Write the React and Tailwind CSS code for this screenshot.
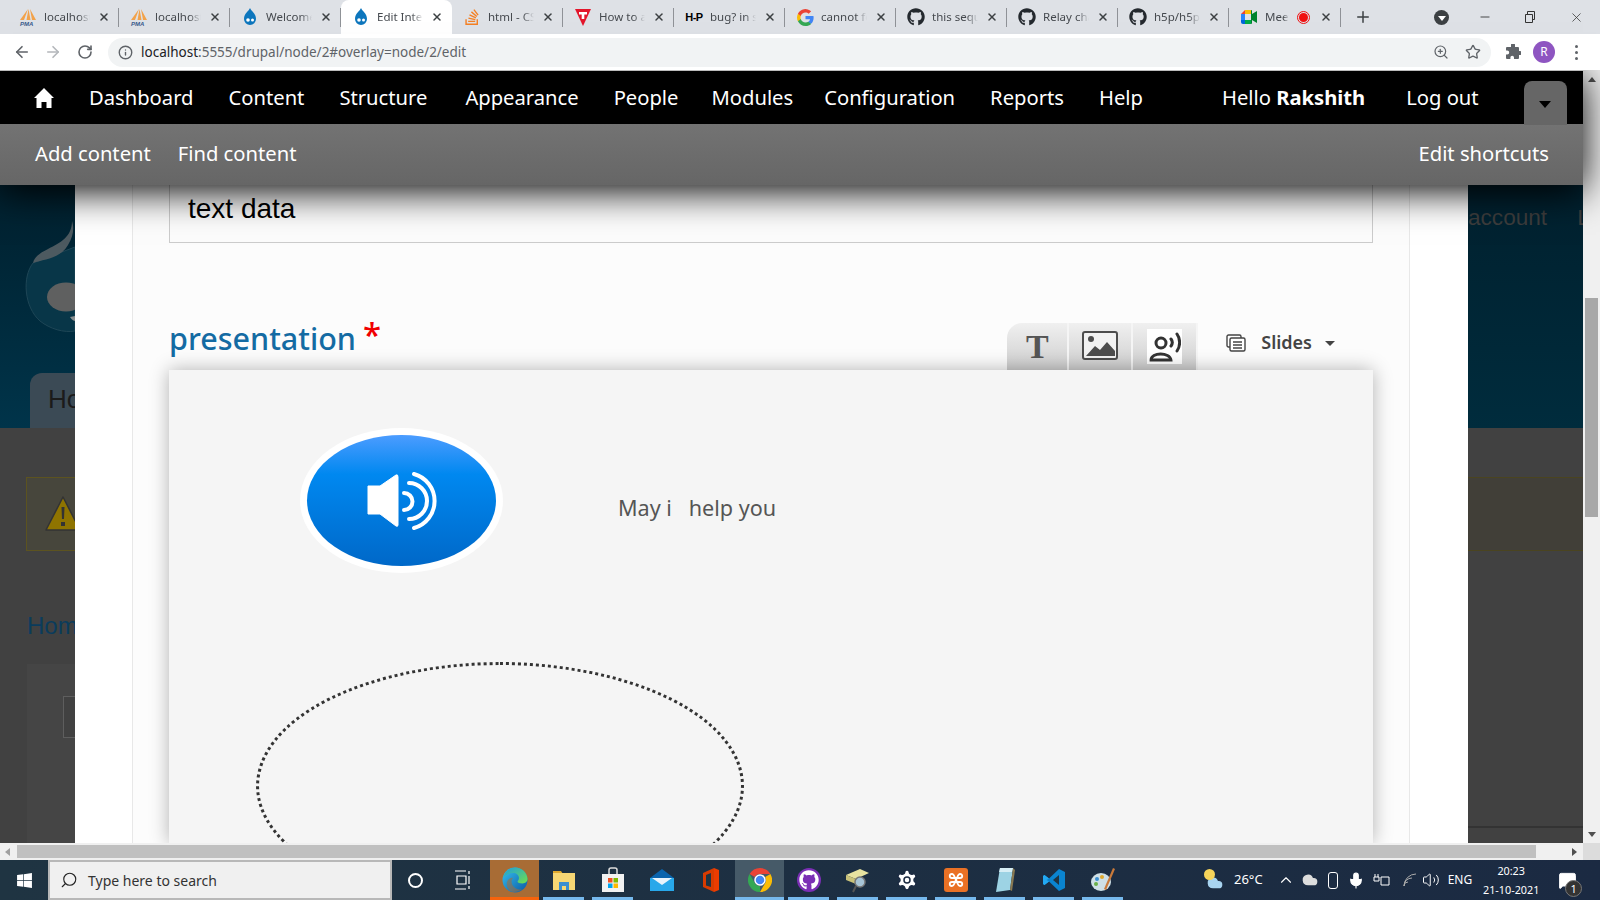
import React from 'react';
import { ArrowLeft, ArrowRight, RotateCw, Info, ZoomIn, Star, X, Plus, Minus, Search, ChevronUp, Mic, Volume2, Cloud, Settings, MessageSquare } from 'lucide-react';
import { FaGithub, FaStackOverflow, FaWindows } from 'react-icons/fa';

const Drop = ({ size = 18 }) => (
  <svg width={size} height={size} viewBox="0 0 18 18">
    <path d="M9 0c1 3 6 5 6 11a6 6 0 0 1-12 0C3 5 8 3 9 0z" fill="#0d76bd" />
    <circle cx="7" cy="12" r="1.8" fill="#fff" />
    <circle cx="11.5" cy="12" r="1.5" fill="#fff" />
  </svg>
);

const Pma = () => (
  <svg width="18" height="18" viewBox="0 0 18 18">
    <path d="M9 1L5 12H1zM9.500 1l2 11H7.500zM11 1l6 11h-4z" fill="#f2a24a" />
    <text x="1" y="17.500" fontSize="6" fontWeight="700" fontStyle="italic" fill="#3a5a8c" fontFamily="Liberation Sans">PMA</text>
  </svg>
);

const Vivaldi = () => (
  <svg width="18" height="18" viewBox="0 0 18 18">
    <path d="M1 1h16L9 18z" fill="#e3162b" />
    <path d="M5 4h8v2.500h-2.700V11H7.700V6.500H5z" fill="#fff" />
  </svg>
);

const GoogleG = () => (
  <svg width="17" height="17" viewBox="0 0 18 18">
    <path d="M17.600 9.200c0-.6-.1-1.200-.2-1.800H9v3.400h4.800a4.100 4.100 0 0 1-1.800 2.700v2.200h2.900c1.700-1.600 2.700-3.800 2.700-6.500z" fill="#4285f4" />
    <path d="M9 18c2.400 0 4.500-.8 5.900-2.200L12 13.500c-.8.500-1.800.9-3 .9-2.300 0-4.300-1.600-5-3.700H1v2.300A9 9 0 0 0 9 18z" fill="#34a853" />
    <path d="M4 10.700a5.400 5.400 0 0 1 0-3.400V5H1a9 9 0 0 0 0 8z" fill="#fbbc05" />
    <path d="M9 3.600c1.300 0 2.500.5 3.400 1.300L15 2.400A9 9 0 0 0 1 5l3 2.300c.7-2.100 2.700-3.700 5-3.700z" fill="#ea4335" />
  </svg>
);

const Meet = () => (
  <svg width="18" height="18" viewBox="0 0 18 18">
    <path d="M1 6l4-4v4z" fill="#ea4335" />
    <path d="M5 2h6v4H5z" fill="#fbbc05" />
    <path d="M1 6h4v6H1z" fill="#2684fc" />
    <path d="M1 12h4v4H3a2 2 0 0 1-2-2z" fill="#0066da" />
    <path d="M5 12h6v4H5z" fill="#00ac47" />
    <path d="M11 2v14a1 1 0 0 0 1-1v-3l5 3V3l-5 3V3a1 1 0 0 0-1-1z" fill="#00832d" />
  </svg>
);

const tabs = [
  { icon: <Pma />, title: 'localhost' },
  { icon: <Pma />, title: 'localhost' },
  { icon: <Drop />, title: 'Welcome' },
  { icon: <Drop />, title: 'Edit Inter', active: true },
  { icon: <FaStackOverflow className="text-[18px] text-[#f48024]" />, title: 'html - CS' },
  { icon: <Vivaldi />, title: 'How to a' },
  { icon: <span className="text-[11px] font-black tracking-tighter text-black [font-family:'Liberation_Sans',sans-serif]">H-P</span>, title: 'bug? in s' },
  { icon: <GoogleG />, title: 'cannot fo' },
  { icon: <FaGithub className="text-[18px] text-[#24292e]" />, title: 'this sequ' },
  { icon: <FaGithub className="text-[18px] text-[#24292e]" />, title: 'Relay cha' },
  { icon: <FaGithub className="text-[18px] text-[#24292e]" />, title: 'h5p/h5p-' },
  { icon: <Meet />, title: 'Meet', rec: true },
];

function Tab({ tab, last }) {
  return (
    <div className={`relative flex h-[34px] w-[111px] shrink-0 items-center pl-[11px] ${tab.active ? 'rounded-t-lg bg-white' : ''}`}>
      <span className="flex w-[18px] justify-center">{tab.icon}</span>
      <span className={`ml-[7px] overflow-hidden whitespace-nowrap text-[11.500px] text-[#45494e] [mask-image:linear-gradient(90deg,#000_75%,transparent)] ${tab.rec ? 'w-[24px]' : 'w-[46px]'}`}>
        {tab.title}
      </span>
      {tab.rec && (
        <span className="ml-[8px] flex h-[13px] w-[13px] items-center justify-center rounded-full border border-[#f01010]">
          <span className="h-[9px] w-[9px] rounded-full bg-[#f01010]" />
        </span>
      )}
      <X className={`${tab.rec ? 'ml-[10px]' : 'ml-[8px]'} h-[12px] w-[12px] text-[#3c4043]`} strokeWidth={3} />
      {!last && !tab.active && <span className="absolute right-0 top-[8px] h-[19px] w-px bg-[#8f9297]" />}
    </div>
  );
}

function TabStrip() {
  return (
    <div className="flex h-[34px] items-center bg-[#dee1e6] pl-[8px] text-[#45494e]">
      {tabs.map((t, i) => <Tab key={i} tab={t} last={i === tabs.length - 1} />)}
      <span className="h-[19px] w-px bg-[#8f9297]" />
      <Plus className="ml-[13px] h-[18px] w-[18px] text-[#3c4043]" strokeWidth={2} />
      <span className="ml-[62px] flex h-[15px] w-[15px] items-center justify-center rounded-full bg-[#3c4043]">
        <span className="mt-[2px] h-0 w-0 border-x-[4px] border-t-[5px] border-x-transparent border-t-white" />
      </span>
      <Minus className="ml-[29px] h-[14px] w-[14px] text-[#333]" strokeWidth={1.5} />
      <svg className="ml-[32px]" width="12" height="12" viewBox="0 0 12 12" fill="none" stroke="#333"><path d="M1.500 3.500h7v8h-7zM3.500 3.500V.5h7v8h-2" /></svg>
      <X className="ml-[33px] h-[15px] w-[15px] text-[#333]" strokeWidth={1.2} />
    </div>
  );
}

function AddressBar() {
  return (
    <div className="relative z-20 flex h-[36px] items-center bg-white">
      <ArrowLeft className="ml-[13px] h-[18px] w-[18px] text-[#5f6368]" strokeWidth={2.2} />
      <ArrowRight className="ml-[13px] h-[18px] w-[18px] text-[#b4b7bb]" strokeWidth={2.2} />
      <RotateCw className="ml-[15px] h-[16px] w-[16px] text-[#5f6368]" strokeWidth={2.4} />
      <div className="ml-[15px] flex h-[29px] w-[1383px] items-center rounded-full bg-[#f1f3f4] pl-[10px]">
        <Info className="h-[15px] w-[15px] text-[#5f6368]" strokeWidth={2.2} />
        <span className="ml-[8px] text-[13.500px] text-[#5f6368]"><span className="text-[#202124]">localhost</span>:5555/drupal/node/2#overlay=node/2/edit</span>
        <ZoomIn className="ml-auto h-[16px] w-[16px] text-[#5f6368]" strokeWidth={1.8} />
        <Star className="ml-[16px] mr-[10px] h-[16px] w-[16px] text-[#5f6368]" strokeWidth={2} />
      </div>
      <svg className="ml-[14px]" width="16" height="16" viewBox="0 0 16 16" fill="#5f6368"><path d="M6 1a2 2 0 0 1 4 0v2h3a1 1 0 0 1 1 1v3h1a2 2 0 0 1 0 4h-1v3a1 1 0 0 1-1 1H9v-1.500a1.800 1.800 0 0 0-3.600 0V15H2a1 1 0 0 1-1-1v-3.500h1.200a2 2 0 0 0 0-4H1V4a1 1 0 0 1 1-1h4z" /></svg>
      <span className="ml-[12px] flex h-[22px] w-[22px] items-center justify-center rounded-full bg-[#8e55c1] text-[12px] text-white">R</span>
      <span className="ml-[20px] flex flex-col gap-[3px]">
        <span className="h-[3px] w-[3px] rounded-full bg-[#5f6368]" />
        <span className="h-[3px] w-[3px] rounded-full bg-[#5f6368]" />
        <span className="h-[3px] w-[3px] rounded-full bg-[#5f6368]" />
      </span>
    </div>
  );
}

// left margins differ a little, the original font has other widths than Noto Sans
const menu = [
  { label: 'Dashboard', cls: 'ml-[35px]' },
  { label: 'Content', cls: 'ml-[35px]' },
  { label: 'Structure', cls: 'ml-[35px]' },
  { label: 'Appearance', cls: 'ml-[38px]' },
  { label: 'People', cls: 'ml-[35px]' },
  { label: 'Modules', cls: 'ml-[33px]' },
  { label: 'Configuration', cls: 'ml-[31px]' },
  { label: 'Reports', cls: 'ml-[35px]' },
  { label: 'Help', cls: 'ml-[35px]' },
];

function AdminToolbar() {
  return (
    <div className="relative z-10 whitespace-nowrap shadow-[0_6px_36px_#000] [font-family:'Noto_Sans',sans-serif]">
      <div className="flex h-[54px] items-center border-t border-[#bbb] bg-black pl-[34px] text-[20.200px] text-white">
        <svg width="20" height="20" viewBox="0 0 20 20" fill="#fff"><path d="M10 0l10 10h-2.500v10h-5v-6h-5v6h-5V10H0z" /></svg>
        {menu.map(m => <span key={m.label} className={m.cls}>{m.label}</span>)}
        <span className="ml-[79px]">Hello <b>Rakshith</b></span>
        <span className="ml-[41px]">Log out</span>
        <div className="ml-[45px] mt-[10px] flex h-[44px] w-[43px] items-center justify-center rounded-t-lg bg-[#666]">
          <span className="mt-[3px] h-0 w-0 border-x-[6px] border-t-[7px] border-x-transparent border-t-black" />
        </div>
      </div>
      <div className="flex h-[61px] items-center bg-gradient-to-b from-[#737373] to-[#666] pb-[3px] pl-[35px] pr-[34px] text-[20.200px] text-white">
        <span>Add content</span>
        <span className="ml-[27px]">Find content</span>
        <span className="ml-auto">Edit shortcuts</span>
      </div>
    </div>
  );
}

function LeftBackdrop() {
  return (
    <div className="flex w-[75px] shrink-0 flex-col overflow-hidden bg-[#414141] [font-family:'Liberation_Sans',sans-serif]">
      <div className="flex h-[243px] shrink-0 flex-col bg-gradient-to-b from-[#00202e] to-[#00344a]">
        <svg className="mt-[32px] shrink-0" width="75" height="118" viewBox="0 0 75 118">
          <path d="M33 46C22 60 24 90 40 104c10 8 24 12 35 10V30z" fill="#083648" stroke="#1e4656" strokeWidth="1" />
          <path d="M72 4c0 16-12 22-24 28-8 4-14 8-15 14 11-4 27-4 35-18 6-10 6-18 4-24z" fill="#4d5a60" />
          <ellipse cx="66" cy="80" rx="19" ry="14.500" fill="#5f6060" />
          <path d="M70 100c2 3 4 4 5 4v-5z" fill="#8a8f90" />
        </svg>
        <div className="ml-[30px] mt-auto h-[55px] rounded-tl-[12px] bg-[#3b4a55] pl-[18px] pt-[7px] text-[26px] text-[#1b1b1b]">Ho</div>
      </div>
      <div className="ml-[26px] mt-[49px] flex h-[74px] shrink-0 items-center border-y border-l border-[#5c5320] bg-[#47463c] pl-[18px]">
        <svg className="shrink-0" width="40" height="36" viewBox="0 0 40 36">
          <path d="M18 1L1 34h34z" fill="#8f7400" stroke="#333" strokeWidth="1.500" strokeLinejoin="round" />
          <path d="M16.500 11h3l-.5 12h-2z M16 26h4v4h-4z" fill="#333" />
        </svg>
      </div>
      <div className="ml-[27px] mt-[57px] whitespace-nowrap text-[24px] text-[#0a3c5c]">Home</div>
      <div className="ml-[27px] mt-[20px] flex-1 bg-[#454545] pl-[36px] pt-[32px]">
        <div className="h-[42px] w-[60px] border border-[#5e5e5e] bg-[#414141]" />
      </div>
    </div>
  );
}

function RightBackdrop() {
  return (
    <div className="flex w-[115px] shrink-0 flex-col overflow-hidden bg-[#414141] [font-family:'Liberation_Sans',sans-serif]">
      <div className="flex h-[243px] shrink-0 gap-[30px] whitespace-nowrap bg-gradient-to-b from-[#00202e] to-[#002c3d] pt-[16px] text-[22.600px] text-[#3d3d3d]">
        <span>account</span>
        <span>Log</span>
      </div>
      <div className="mt-[49px] h-[74px] shrink-0 border-y border-[#4a4420] bg-[#413f38]" />
      <div className="mt-[275px] h-[2px] shrink-0 bg-[#333]" />
    </div>
  );
}

function EditorTabs() {
  return (
    <div className="flex h-[47px] items-center">
      <div className="flex h-full overflow-hidden rounded-tl-[15px] bg-gradient-to-b from-[#f0f0f0] to-[#cecece]">
        <div className="flex w-[62px] items-center justify-center border-r-2 border-[#f5f5f5] text-[34px] font-bold leading-none text-[#555] [font-family:'Liberation_Serif',serif]">T</div>
        <div className="flex w-[64px] items-center justify-center border-r-2 border-[#f5f5f5] pb-[1px]">
          <svg width="36" height="30" viewBox="0 0 36 30">
            <rect x="1" y="1" width="34" height="27" rx="2" fill="#f2f2f2" stroke="#4d4d4d" strokeWidth="2" />
            <circle cx="9" cy="8" r="3" fill="#4d4d4d" />
            <path d="M4 25l9-10 5 4 7-8 8 9v5z" fill="#4d4d4d" />
          </svg>
        </div>
        <div className="flex w-[65px] items-center justify-center border-r-2 border-[#f5f5f5]">
          <div className="flex h-[35px] w-[35px] items-center justify-center bg-white">
            <svg width="33" height="30" viewBox="0 0 33 30" fill="none" stroke="#333" strokeWidth="3">
              <circle cx="13" cy="11" r="5" />
              <path d="M3 28c0-8 19-8 20 0z" strokeWidth="2.800" />
              <path d="M23 7c1.500 2 1.500 5 0 7M29 2c3.500 5 3.500 12 0 17" strokeLinecap="round" />
            </svg>
          </div>
        </div>
      </div>
      <div className="mb-[8px] flex items-center">
        <svg className="ml-[28px]" width="20" height="18" viewBox="0 0 20 18" fill="#fff" stroke="#444" strokeWidth="1.400">
          <rect x="1" y="1" width="14" height="12" rx="1.500" />
          <rect x="4" y="4" width="15" height="13" rx="1.500" />
          <path d="M7 8h9M7 11h9M7 14h9" />
        </svg>
        <span className="ml-[15px] text-[18px] font-semibold text-[#444] [font-family:'Noto_Sans',sans-serif]">Slides</span>
        <span className="ml-[13px] mt-[2px] h-0 w-0 border-x-[5px] border-t-[5px] border-x-transparent border-t-[#444]" />
      </div>
    </div>
  );
}

function AudioButton() {
  return (
    <div className="h-[145px] w-[203px] shrink-0 rounded-[50%] bg-white p-[7px]">
      <div className="flex h-full w-full items-center justify-center rounded-[50%] bg-[linear-gradient(180deg,#4c9cff_0%,#0088f0_30%,#0068c8_100%)]">
        <svg width="70" height="58" viewBox="0 0 70 58">
          <path d="M1 14h12L29 3q2-1 2 2v48q0 2-2 1L13 42H1z" fill="#fff" stroke="#fff" strokeLinejoin="round" />
          <path d="M37 21a8.500 8.500 0 0 1 0 17M42 11a18 18 0 0 1 0 36M47 2a28 28 0 0 1 0 54" fill="none" stroke="#fff" strokeWidth="4" strokeLinecap="round" />
        </svg>
      </div>
    </div>
  );
}

function OverlayForm() {
  return (
    <div className="flex w-[1393px] shrink-0 overflow-hidden bg-white">
      <div className="ml-[57px] flex w-[1278px] shrink-0 flex-col border-x border-[#e8e8e8] bg-[#fcfcfc] pl-[36px] pr-[36px]">
        <div className="flex h-[58px] shrink-0 items-center border-x border-b border-[#ccc] pb-[10px] pl-[18px] text-[28px] text-black [font-family:'Liberation_Sans',sans-serif]">
          text data
        </div>
        <div className="mt-[80px] flex h-[47px] shrink-0 items-end justify-between pr-[38px]">
          <div className="mb-[10px] flex items-start [font-family:'Noto_Sans',sans-serif]">
            <span className="text-[30.500px] font-medium leading-[44px] text-[#146ba3]">presentation</span>
            <span className="ml-[7px] mt-[-3px] text-[33px] font-medium leading-[44px] text-[#f00000]">*</span>
          </div>
          <EditorTabs />
        </div>
        <div className="z-[1] min-h-0 flex-1 overflow-hidden bg-[#f5f5f5] pl-[131px] pt-[58px] shadow-[0_0_18px_rgba(0,0,0,0.3)]">
          <div className="flex">
            <AudioButton />
            <span className="ml-[115px] mt-[64px] whitespace-pre text-[21.600px] text-[#555] [font-family:'Noto_Sans',sans-serif]">May i   help you</span>
          </div>
          <div className="ml-[-44px] mt-[89px] h-[248px] w-[488px] rounded-[50%] border-[3px] border-dotted border-[#333]" />
        </div>
      </div>
    </div>
  );
}

function VScrollbar() {
  return (
    <div className="flex w-[17px] shrink-0 flex-col items-center bg-[#f0f0f0] pt-[7px]">
      <span className="h-0 w-0 border-x-[4px] border-b-[5px] border-x-transparent border-b-[#505050]" />
      <span className="mt-[216px] h-[219px] w-[13px] bg-[#a8a8a8]" />
      <span className="mt-auto mb-[6px] h-0 w-0 border-x-[4px] border-t-[5px] border-x-transparent border-t-[#505050]" />
    </div>
  );
}

function HScrollbar() {
  return (
    <div className="flex h-[17px] items-center bg-[#f0f0f0]">
      <span className="ml-[5px] h-0 w-0 border-y-[4px] border-r-[5px] border-y-transparent border-r-[#a0a0a0]" />
      <span className="ml-[7px] h-[13px] w-[1519px] bg-[#c0c0c0]" />
      <span className="ml-[36px] h-0 w-0 border-y-[4px] border-l-[5px] border-y-transparent border-l-[#505050]" />
      <span className="ml-auto h-full w-[17px] bg-[#dcdcdc]" />
    </div>
  );
}

const EdgeIcon = () => (
  <svg width="26" height="26" viewBox="0 0 26 26">
    <defs>
      <linearGradient id="edgeA" x1="0" y1="0" x2="1" y2="1"><stop offset="0" stopColor="#35c1f1" /><stop offset="1" stopColor="#0c59a4" /></linearGradient>
      <linearGradient id="edgeB" x1="0" y1="0" x2="1" y2="1"><stop offset="0" stopColor="#1b9de2" /><stop offset="1" stopColor="#6fe04a" /></linearGradient>
    </defs>
    <circle cx="13" cy="13" r="12.500" fill="url(#edgeA)" />
    <path d="M1 11C3 3 9 .5 13 .5c7 0 12 5 12.500 11 .2 3-2 5-5 5-3 0-5-1-5-2 0-.8 1.500-1.500 1.500-3.500 0-3-3-5-5.500-5C7 6 3 8 1 11z" fill="url(#edgeB)" />
    <path d="M11 25c-5-1-7-6-6-10 1-3 4-5 6-4-2 2-2 6 1 9 2 2 5 3 8 2-2 2-5 3-9 3z" fill="#a86c35" opacity=".55" />
  </svg>
);
const FolderIcon = () => (
  <svg width="24" height="24" viewBox="0 0 24 24"><path d="M1 3h8l2 3H1z" fill="#e0a92e" /><path d="M1 5h22v17H1z" fill="#f7d774" /><path d="M7 14h10v8H7z" fill="#3b8ed0" /><path d="M10 18h4v4h-4z" fill="#f7d774" /></svg>
);
const StoreIcon = () => (
  <svg width="24" height="26" viewBox="0 0 24 26" fill="none"><path d="M8 8V3a2 2 0 0 1 2-2h4a2 2 0 0 1 2 2v5" stroke="#ddd" strokeWidth="1.500" /><path d="M1 7h22v18H1z" fill="#f2f2f2" /><path d="M7 11h4.500v4.500H7z" fill="#f25022" /><path d="M12.500 11H17v4.500h-4.500z" fill="#7fba00" /><path d="M7 16.500h4.500V21H7z" fill="#00a4ef" /><path d="M12.500 16.500H17V21h-4.500z" fill="#ffb900" /></svg>
);
const MailIcon = () => (
  <svg width="24" height="24" viewBox="0 0 24 24"><path d="M0 10L12 1l12 9v12H0z" fill="#0a64ad" /><path d="M0 10h24v13H0z" fill="#28a8ea" /><path d="M2 10h20l-10 7z" fill="#e8f4fc" /></svg>
);
const OfficeIcon = () => (
  <svg width="22" height="26" viewBox="0 0 22 26"><path d="M3 6l11-5v24L3 20z" fill="#d83b01" /><path d="M14 1l5 2v20l-5 2z" fill="#eb3c00" /><path d="M6 8l5-2v14l-5-1.500z" fill="#1f3442" /></svg>
);
const ChromeIcon = () => (
  <svg width="24" height="24" viewBox="0 0 24 24">
    <path d="M12 0a12 12 0 0 1 10.400 6H12a6 6 0 0 0-5.200 3L1.600 6A12 12 0 0 1 12 0z" fill="#ea4335" />
    <path d="M22.400 6A12 12 0 0 1 12 24l5.200-9a6 6 0 0 0 0-6z" fill="#fbbc05" />
    <path d="M12 24A12 12 0 0 1 1.600 6l5.200 9a6 6 0 0 0 5.200 3z" fill="#34a853" />
    <circle cx="12" cy="12" r="5" fill="#4285f4" stroke="#fff" strokeWidth="1.500" />
  </svg>
);
const GithubDesktop = () => (
  <span className="flex h-[24px] w-[24px] items-center justify-center rounded-full bg-[#7b2fb5]"><FaGithub className="text-[20px] text-white" /></span>
);
const ScannerIcon = () => (
  <svg width="26" height="26" viewBox="0 0 26 26"><path d="M1 8l14-6 9 4-13 6z" fill="#e8e3a0" /><path d="M1 8l10 4v5L1 13z" fill="#c9c27a" /><circle cx="15" cy="15" r="5" fill="#a7c4d6" stroke="#777" strokeWidth="1.500" /><path d="M11 19l-3 6" stroke="#555" strokeWidth="2" /></svg>
);
const XamppIcon = () => (
  <svg width="24" height="24" viewBox="0 0 24 24" fill="none"><rect width="24" height="24" rx="3" fill="#ea7125" /><path d="M8 6c-3 0-3 4 0 4h8c3 0 3-4 0-4-2 0-2 2-4 6s-2 6-4 6c-3 0-3-4 0-4h8c3 0 3 4 0 4-2 0-2-2-4-6s-2-6-4-6z" stroke="#fff" strokeWidth="1.800" /></svg>
);
const NotepadIcon = () => (
  <svg width="24" height="26" viewBox="0 0 24 26"><path d="M7 1h13l-3 22-14 2z" fill="#9dd3e4" /><path d="M7 1h13l-1 4H6z" fill="#d7eef5" /><path d="M17 23l3-22 2 2-3 21z" fill="#8a7a52" /></svg>
);
const VsCodeIcon = () => (
  <svg width="24" height="26" viewBox="0 0 24 24"><path d="M17 1l6 3v16l-6 3L7 13.500 2.500 17 1 16V8l1.500-1L7 10.500z" fill="#0a84d0" /><path d="M17 7l-6 5 6 5z" fill="#1f3442" /><path d="M2.500 7L7 10.500 4.500 12 7 13.500 2.500 17 1 16V8z" fill="#23a9f2" /></svg>
);
const PaletteIcon = () => (
  <svg width="26" height="26" viewBox="0 0 26 26"><ellipse cx="11" cy="15" rx="10" ry="9" fill="#cfe0e6" /><circle cx="7" cy="12" r="2" fill="#3b8ed0" /><circle cx="12" cy="10" r="2" fill="#e0a92e" /><circle cx="6" cy="17" r="2" fill="#6bb04a" /><path d="M23 1l2 1-9 21-2-1z" fill="#c97a3a" /></svg>
);

const apps = [
  { icon: <EdgeIcon />, on: 'edge' },
  { icon: <FolderIcon />, on: 'run' },
  { icon: <StoreIcon />, on: 'run' },
  { icon: <MailIcon /> },
  { icon: <OfficeIcon /> },
  { icon: <ChromeIcon />, on: 'active' },
  { icon: <GithubDesktop />, on: 'run' },
  { icon: <ScannerIcon />, on: 'run' },
  { icon: <Settings className="h-[24px] w-[24px] fill-white text-[#1c2b42]" strokeWidth={1.500} />, on: 'run' },
  { icon: <XamppIcon />, on: 'run' },
  { icon: <NotepadIcon />, on: 'run' },
  { icon: <VsCodeIcon />, on: 'run' },
  { icon: <PaletteIcon />, on: 'run' },
];

function AppSlot({ app }) {
  return (
    <div className={`relative flex h-full w-[49px] items-center justify-center ${app.on === 'edge' ? 'bg-[#a86c35]' : ''} ${app.on === 'active' ? 'bg-[#465a68]' : ''}`}>
      {app.icon}
      {app.on === 'run' && <span className="absolute bottom-0 left-[4px] h-[3px] w-[41px] bg-[#76b9ed]" />}
      {app.on === 'active' && <span className="absolute bottom-0 left-0 h-[3px] w-full bg-[#76b9ed]" />}
      {app.on === 'edge' && <span className="absolute bottom-0 left-0 h-[3px] w-full bg-[#f7630c]" />}
    </div>
  );
}

function Taskbar() {
  return (
    <div className="flex h-[40px] items-center whitespace-nowrap bg-gradient-to-r from-[#1f3442] to-[#1b2a42] text-white [font-family:'Noto_Sans',sans-serif]">
      <div className="flex w-[48px] justify-center"><FaWindows className="text-[17px] text-white" /></div>
      <div className="flex h-full w-[344px] items-center border-2 border-[#b8b8b8] bg-[#f0f0f0] pl-[10px] text-[14px] text-[#333]">
        <Search className="h-[18px] w-[18px] -scale-x-100 text-[#222]" strokeWidth={1.500} />
        <span className="ml-[10px]">Type here to search</span>
      </div>
      <div className="flex w-[47px] justify-center"><span className="h-[15px] w-[15px] rounded-full border-2 border-white" /></div>
      <div className="flex w-[48px] justify-center">
        <svg width="16" height="20" viewBox="0 0 16 20" fill="none" stroke="#fff" strokeWidth="1.200"><path d="M0 1h11M2 6h9v8H2zM0 19h11" /><path d="M14 1v3M14 6v8M14 16v3" /></svg>
      </div>
      <div className="ml-[3px] flex h-full">
        {apps.map((a, i) => <AppSlot key={i} app={a} />)}
      </div>
      <div className="relative ml-[76px] flex h-[22px] w-[24px] items-center justify-center">
        <Cloud className="absolute bottom-0 h-[16px] w-[20px] fill-[#a8d4f0] text-[#a8d4f0]" />
        <span className="absolute left-[1px] top-0 h-[11px] w-[11px] rounded-full bg-[#f6d45a]" />
      </div>
      <span className="ml-[7px] text-[13px]">26°C</span>
      <ChevronUp className="ml-[14px] h-[18px] w-[18px]" strokeWidth={1.500} />
      <Cloud className="ml-[6px] h-[16px] w-[18px] fill-[#ddd] text-[#ddd]" />
      <span className="ml-[9px] h-[17px] w-[10px] rounded-[3px] border border-white" />
      <Mic className="ml-[9px] h-[19px] w-[18px] fill-white" strokeWidth={1.500} />
      <svg className="ml-[8px]" width="17" height="15" viewBox="0 0 17 15" fill="none" stroke="#fff"><path d="M2 1v3M5 1v3M1 4h5v4H1zM8 4h8v8H8z" /></svg>
      <svg className="ml-[13px]" width="14" height="14" viewBox="0 0 14 14" fill="none" stroke="#aaa"><path d="M1 13a12 12 0 0 1 12-12M1 13a8 8 0 0 1 8-8M1 13a4 4 0 0 1 4-4" /></svg>
      <Volume2 className="ml-[5px] h-[18px] w-[18px]" strokeWidth={1.300} />
      <span className="ml-[8px] text-[12px]">ENG</span>
      <div className="ml-[9px] flex w-[60px] flex-col items-center text-[10.800px] leading-[19px]">
        <span>20:23</span>
        <span>21-10-2021</span>
      </div>
      <div className="relative ml-[16px] flex h-[22px] w-[20px] items-center justify-center">
        <MessageSquare className="h-[19px] w-[19px] fill-white" strokeWidth={1.200} />
        <span className="absolute right-[-5px] bottom-[-6px] flex h-[17px] w-[17px] items-center justify-center rounded-full border border-[#777] bg-[#333] text-[11px] leading-none">1</span>
      </div>
    </div>
  );
}

export default function App() {
  return (
    <div className="flex h-[900px] w-[1600px] flex-col overflow-hidden [font-family:'Noto_Sans',sans-serif]">
      <TabStrip />
      <AddressBar />
      <div className="flex h-[773px] shrink-0">
        <div className="flex w-[1583px] shrink-0 flex-col">
          <AdminToolbar />
          <div className="flex min-h-0 flex-1">
            <LeftBackdrop />
            <OverlayForm />
            <RightBackdrop />
          </div>
        </div>
        <VScrollbar />
      </div>
      <HScrollbar />
      <Taskbar />
    </div>
  );
}
